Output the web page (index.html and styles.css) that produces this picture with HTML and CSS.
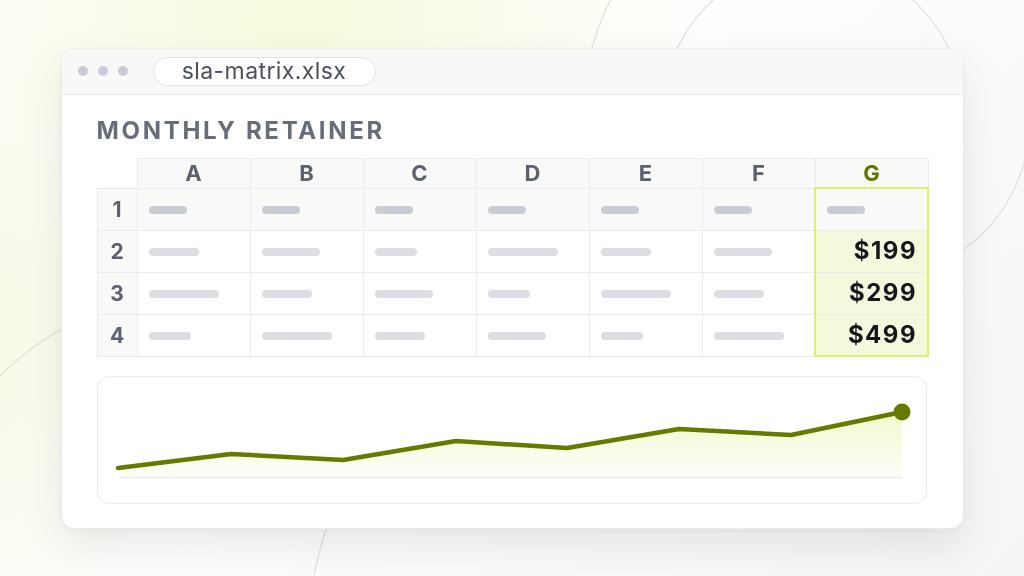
FILE: index.html
```html
<!DOCTYPE html>
<html lang="en">
<head>
  <meta charset="UTF-8">
  <title>sla-matrix.xlsx</title>
  <link rel="stylesheet" href="styles.css">
</head>
<body>

  <!-- decorative rings behind the window -->
  <svg class="backdrop" width="1024" height="576" viewBox="0 0 1024 576">
    <path d="M 613 -5 A 252 252 0 0 0 589 60" />
    <circle cx="813" cy="112" r="150" />
    <path d="M 963 250 A 160 160 0 0 0 1030 120" />
    <path d="M -10 386 A 314 314 0 0 1 100 310" />
    <path d="M 310 600 A 393 393 0 0 1 337 500" />
  </svg>

  <div class="window">
    <div class="titlebar">
      <div class="dots">
        <span></span><span></span><span></span>
      </div>
      <div class="filename">sla-matrix.xlsx</div>
    </div>

    <div class="content">
      <h2 class="sheet-title">MONTHLY RETAINER</h2>

      <table class="sheet">
        <tr class="head">
          <th class="corner"></th>
          <th>A</th><th>B</th><th>C</th><th>D</th><th>E</th><th>F</th>
          <th class="pick">G</th>
        </tr>
        <tr class="first">
          <th class="num">1</th>
          <td><span class="bar xs"></span></td>
          <td><span class="bar xs"></span></td>
          <td><span class="bar xs"></span></td>
          <td><span class="bar xs"></span></td>
          <td><span class="bar xs"></span></td>
          <td><span class="bar xs"></span></td>
          <td class="pick top"><span class="bar xs"></span></td>
        </tr>
        <tr>
          <th class="num">2</th>
          <td><span class="bar m"></span></td>
          <td><span class="bar l"></span></td>
          <td><span class="bar s"></span></td>
          <td><span class="bar xl"></span></td>
          <td><span class="bar m"></span></td>
          <td><span class="bar l"></span></td>
          <td class="pick price">$199</td>
        </tr>
        <tr>
          <th class="num">3</th>
          <td><span class="bar xl"></span></td>
          <td><span class="bar m"></span></td>
          <td><span class="bar l"></span></td>
          <td><span class="bar s"></span></td>
          <td><span class="bar xl"></span></td>
          <td><span class="bar m"></span></td>
          <td class="pick price">$299</td>
        </tr>
        <tr>
          <th class="num">4</th>
          <td><span class="bar s"></span></td>
          <td><span class="bar xl"></span></td>
          <td><span class="bar m"></span></td>
          <td><span class="bar l"></span></td>
          <td><span class="bar s"></span></td>
          <td><span class="bar xl"></span></td>
          <td class="pick price bottom">$499</td>
        </tr>
      </table>

      <div class="chart">
        <svg width="830" height="128" viewBox="0 0 830 128">
          <defs>
            <linearGradient id="area" x1="0" y1="0" x2="0" y2="1">
              <stop offset="0" stop-color="#eef8c4" stop-opacity="0.9" />
              <stop offset="1" stop-color="#fbfdf1" stop-opacity="0.6" />
            </linearGradient>
          </defs>
          <polygon class="area" points="22,92 135,78 247,84 360,65 471,72 583,53 695,59 806,36 806,101 22,101" />
          <line class="base" x1="23" y1="101.5" x2="806" y2="101.5" />
          <polyline class="trend" points="22,92 135,78 247,84 360,65 471,72 583,53 695,59 806,36" />
          <circle class="last" cx="806" cy="36" r="8.5" />
        </svg>
      </div>
    </div>
  </div>

</body>
</html>
```

FILE: styles.css
```css
/* Página */
html, body {
  margin: 0;
  padding: 0;
}

body {
  width: 1024px;
  height: 576px;
  overflow: hidden;
  font-family: Inter, "Noto Sans", sans-serif;
  background:
    radial-gradient(ellipse 520px 300px at 300px 20px, #f5fbdc 0%, rgba(248, 252, 232, 0.6) 45%, rgba(255, 255, 255, 0) 80%),
    radial-gradient(ellipse 180px 380px at 0 330px, #f6fae6 0%, rgba(255, 255, 255, 0) 100%),
    linear-gradient(135deg, #ffffff 40%, #f4f5f6 100%);
  display: flex;
  align-items: center;
  justify-content: center;
}

.backdrop {
  position: fixed;
  top: 0;
  left: 0;
  z-index: 0;
}

.backdrop circle,
.backdrop path {
  fill: none;
  stroke: #e4e5e1;
  stroke-width: 1.5;
}

/* Janela */
.window {
  position: relative;
  z-index: 1;
  width: 903px;
  height: 481px;
  box-sizing: border-box;
  background-color: white;
  border: 1px solid #ebebe8;
  border-radius: 13px;
  box-shadow: 0 18px 40px rgba(40, 45, 55, 0.10), 0 2px 6px rgba(40, 45, 55, 0.04);
  overflow: hidden;
}

.titlebar {
  height: 46px;
  box-sizing: border-box;
  background-color: #f8f8f6;
  border-bottom: 1.5px solid #ebebe8;
  display: flex;
  align-items: center;
  padding-left: 16px;
  gap: 25px;
}

.dots {
  display: flex;
  gap: 10px;
}

.dots span {
  width: 10px;
  height: 10px;
  border-radius: 50%;
  background-color: #c9ccd6;
}

.filename {
  width: 223px;
  height: 29px;
  box-sizing: border-box;
  border: 1px solid #e3e3e0;
  border-radius: 15px;
  background-color: white;
  color: #4a4f5c;
  font-size: 23px;
  line-height: 26px;
  letter-spacing: 0.4px;
  text-align: center;
}

/* Conteúdo */
.content {
  padding: 22px 35px 0 35px;
}

.sheet-title {
  margin: 0 0 13px 0;
  font-size: 24px;
  line-height: 28px;
  font-weight: 700;
  letter-spacing: 2.7px;
  color: #686d7b;
}

/* Planilha */
.sheet {
  border-collapse: collapse;
  table-layout: fixed;
  width: 831px;
}

.sheet th,
.sheet td {
  border: 1.5px solid #ebebe8;
  padding: 0 11px;
  box-sizing: border-box;
}

.sheet .head th {
  height: 30px;
  width: 113px;
  background-color: #f9f9f7;
  color: #5c6170;
  font-size: 22px;
  font-weight: 700;
  text-align: center;
  line-height: 28px;
}

.sheet .head th.corner {
  width: 40px;
  background-color: transparent;
  border-top-color: transparent;
  border-left-color: transparent;
}

.sheet .head th.pick {
  color: #617500;
}

.sheet tr {
  height: 42px;
}

.sheet .head {
  height: 30px;
}

.sheet th.num {
  width: 40px;
  padding: 0;
  background-color: #f9f9f7;
  color: #5c6170;
  font-size: 21px;
  font-weight: 700;
  text-align: center;
}

.sheet .first td {
  background-color: #f9f9f7;
}

.sheet td {
  vertical-align: middle;
  line-height: 8px;
}

.bar {
  display: inline-block;
  height: 8px;
  border-radius: 4px;
  background-color: #dcdee3;
  vertical-align: middle;
}

.bar.xs { width: 38px; background-color: #c9ccd5; }
.bar.s { width: 42px; }
.bar.m { width: 50px; }
.bar.l { width: 58px; }
.bar.xl { width: 70px; }

/* Coluna destacada */
.sheet td.pick {
  border-left: 2px solid #ddf06c;
  border-right: 2px solid #ddf06c;
}

.sheet td.pick.top {
  border-top: 2px solid #ddf06c;
}

.sheet td.pick.bottom {
  border-bottom: 2px solid #ddf06c;
}

.sheet td.price {
  background-color: #f3f9dc;
  text-align: right;
  padding-right: 10px;
  font-size: 24px;
  line-height: 28px;
  font-weight: 700;
  letter-spacing: 1.5px;
  color: #15171c;
}

/* Gráfico */
.chart {
  margin-top: 19px;
  width: 830px;
  height: 128px;
  box-sizing: border-box;
  border: 1.5px solid #eaeae7;
  border-radius: 12px;
  overflow: hidden;
}

.chart svg {
  display: block;
  margin: -1.5px 0 0 -1.5px;
}

.chart .area {
  fill: url(#area);
}

.chart .base {
  stroke: #ebebe8;
  stroke-width: 1.5;
}

.chart .trend {
  fill: none;
  stroke: #667a00;
  stroke-width: 4.5;
  stroke-linecap: round;
  stroke-linejoin: round;
}

.chart .last {
  fill: #667a00;
}
```
